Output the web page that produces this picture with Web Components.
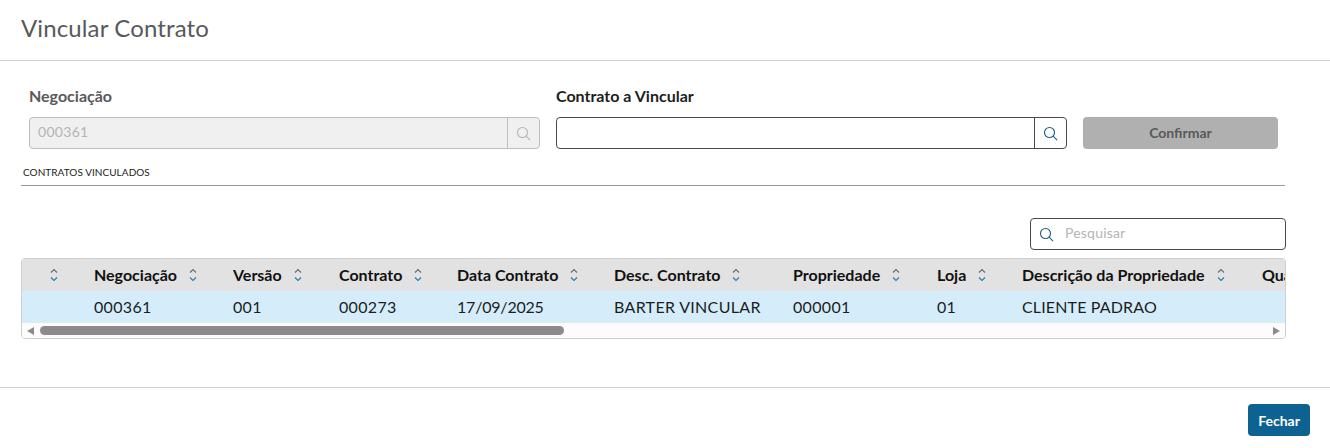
<!DOCTYPE html>
<html lang="pt-BR">
<head>
<meta charset="utf-8">
<title>Vincular Contrato</title>
<style>
  html, body { margin: 0; padding: 0; background: #fff; }
  body { width: 1330px; height: 448px; overflow: hidden; font-family: "Lato", "Open Sans", sans-serif; color: #1d1d20; }
</style>
</head>
<body>
<contract-dialog></contract-dialog>

<template id="search-svg">
  <svg width="15" height="15" viewBox="0 0 15 15" fill="none" stroke-width="1.1">
    <circle cx="6.5" cy="6.5" r="5" stroke="var(--ring, #444)"></circle>
    <path d="M10.2 10.2l3.6 3.6" stroke="var(--handle, #0c6c94)" stroke-linecap="round"></path>
  </svg>
</template>

<script>
const searchIcon = () => document.getElementById("search-svg").innerHTML;

class LookupField extends HTMLElement {
  connectedCallback() {
    const disabled = this.hasAttribute("disabled");
    this.attachShadow({ mode: "open" }).innerHTML = /* html */`
    <style>
      :host { display: block; width: 511px; }
      label { display: block; font-size: 16px; line-height: 20px; font-weight: 700; height: 31px; color: ${disabled ? "#58595b" : "#1d1d20"}; }
      .box {
        display: flex; height: 32px; box-sizing: border-box; border-radius: 4px;
        border: 1px solid ${disabled ? "#bdbdbd" : "#4a4a4a"};
        background: ${disabled ? "#f0f0f0" : "#fff"};
      }
      .value { flex: 1; padding-left: 8px; font-size: 14px; line-height: 28px; color: #b5b5b5; letter-spacing: .3px; }
      .btn {
        box-sizing: border-box; width: 32px; display: flex; align-items: center; justify-content: center;
        border-left: 1px solid ${disabled ? "#bdbdbd" : "#4a4a4a"};
        --ring: ${disabled ? "#b5b5b5" : "#1f5a7d"}; --handle: ${disabled ? "#b5b5b5" : "#0c6c94"};
      }
    </style>
    <label>${this.getAttribute("label")}</label>
    <div class="box">
      <div class="value">${this.getAttribute("value") || ""}</div>
      <div class="btn">${searchIcon()}</div>
    </div>`;
  }
}
customElements.define("lookup-field", LookupField);

class ActionButton extends HTMLElement {
  connectedCallback() {
    const primary = this.hasAttribute("primary");
    this.attachShadow({ mode: "open" }).innerHTML = /* html */`
    <style>
      :host {
        display: flex; align-items: center; justify-content: center; box-sizing: border-box;
        height: 32px; border-radius: 4px; font-size: 14px; font-weight: 700;
        padding-bottom: var(--btn-lift, 0);
        background: ${primary ? "#0c6291" : "#b0b0b0"};
        color: ${primary ? "#fff" : "#58595b"};
      }
    </style>
    <slot></slot>`;
  }
}
customElements.define("action-button", ActionButton);

class SearchBox extends HTMLElement {
  connectedCallback() {
    this.attachShadow({ mode: "open" }).innerHTML = /* html */`
    <style>
      :host {
        display: flex; align-items: center; box-sizing: border-box;
        width: 256px; height: 32px; border: 1px solid #4a4a4a; border-radius: 4px;
        padding-left: 8px; gap: 11px; --ring: #1f5a7d; --handle: #0c6c94;
      }
      span { font-size: 14px; line-height: 16px; color: #b5b5b5; letter-spacing: .2px; padding-bottom: 2px; }
      svg { display: block; }
    </style>
    ${searchIcon()}<span>${this.getAttribute("placeholder")}</span>`;
  }
}
customElements.define("search-box", SearchBox);

class SortHeader extends HTMLElement {
  connectedCallback() {
    this.attachShadow({ mode: "open" }).innerHTML = /* html */`
    <style>
      :host { display: flex; align-items: center; white-space: nowrap; font-size: 16px; font-weight: 700; color: #111; gap: 11px; }
      svg { display: block; flex: none; margin-top: 1px; }
    </style>
    <slot></slot>
    <svg width="10" height="16" viewBox="0 0 10 16" fill="none" stroke-width="1.1">
      <path d="M2 5.5L5 2.5 8 5.5" stroke="#5f6f7a"></path>
      <path d="M2 10.5L5 13.5 8 10.5" stroke="#1f7fb5"></path>
    </svg>`;
  }
}
customElements.define("sort-header", SortHeader);

class ContractTable extends HTMLElement {
  connectedCallback() {
    const cols = [
      ["", ""], ["Negociação", "000361"], ["Versão", "001"], ["Contrato", "000273"],
      ["Data Contrato", "17/09/2025"], ["Desc. Contrato", "BARTER VINCULAR"],
      ["Propriedade", "000001"], ["Loja", "01"],
      ["Descrição da Propriedade", "CLIENTE PADRAO"], ["Quant", ""],
    ];
    const head = cols.map(c => `<div class="cell"><sort-header>${c[0]}</sort-header></div>`).join("");
    const row = cols.map(c => `<div class="cell">${c[1]}</div>`).join("");
    this.attachShadow({ mode: "open" }).innerHTML = /* html */`
    <style>
      :host { display: block; box-sizing: border-box; width: 1265px; height: 81px; border: 1px solid #cfcfcf; border-radius: 4px; overflow: hidden; }
      .row { display: grid; grid-template-columns: 72px 139px 106px 118px 157px 179px 144px 85px 240px 100px; height: 32px; width: 1340px; align-items: center; box-sizing: border-box; padding-bottom: 2px; }
      .head { background: #e2e2e2; }
      .body { background: #d5edfb; font-size: 16px; color: #1d1d20; letter-spacing: .32px; }
      .body .cell:nth-child(5) { letter-spacing: -.2px; }
      .body .cell:nth-child(9) { letter-spacing: .15px; }
      .cell { overflow: hidden; white-space: nowrap; }
      .cell:first-child sort-header { padding-left: 27px; gap: 0; }
      .bar { display: flex; align-items: center; height: 15px; background: #fcfcfc; padding: 0 5px; gap: 6px; }
      .arrow { width: 0; height: 0; border-top: 4px solid transparent; border-bottom: 4px solid transparent; }
      .left { border-right: 7px solid #8b8b8b; }
      .right { border-left: 7px solid #8b8b8b; margin-left: auto; }
      .thumb { width: 524px; height: 9px; border-radius: 5px; background: #8b8b8b; }
    </style>
    <div class="row head">${head}</div>
    <div class="row body">${row}</div>
    <div class="bar"><i class="arrow left"></i><div class="thumb"></div><i class="arrow right"></i></div>`;
  }
}
customElements.define("contract-table", ContractTable);

class ContractDialog extends HTMLElement {
  connectedCallback() {
    this.attachShadow({ mode: "open" }).innerHTML = /* html */`
    <style>
      :host { display: block; width: 1330px; height: 448px; }
      header { height: 60px; border-bottom: 1px solid #cfcfcf; padding-left: 21px; font-size: 24px; line-height: 56px; color: #58595b; letter-spacing: .12px; }
      main { height: 327px; box-sizing: border-box; border-bottom: 1px solid #cfcfcf; padding: 25px 45px 0 21px; }
      .form { display: flex; align-items: flex-end; gap: 16px; padding-left: 8px; }
      .form action-button { width: 195px; margin-right: 7px; --btn-lift: 2px; }
      .section { font-size: 10px; line-height: 14px; margin-top: 16px; padding: 0 0 6px 2px; border-bottom: 1px solid #9a9a9a; width: 1262px; color: #1d1d20; letter-spacing: .05px; }
      .tools { display: flex; justify-content: flex-end; margin: 32px 0 8px; width: 1265px; }
      footer { display: flex; justify-content: flex-end; padding: 16px 20px 0 0; }
      footer action-button { width: 62px; }
    </style>
    <header>Vincular Contrato</header>
    <main>
      <div class="form">
        <lookup-field label="Negociação" value="000361" disabled></lookup-field>
        <lookup-field label="Contrato a Vincular"></lookup-field>
        <action-button>Confirmar</action-button>
      </div>
      <div class="section">CONTRATOS VINCULADOS</div>
      <div class="tools"><search-box placeholder="Pesquisar"></search-box></div>
      <contract-table></contract-table>
    </main>
    <footer><action-button primary>Fechar</action-button></footer>`;
  }
}
customElements.define("contract-dialog", ContractDialog);
</script>
</body>
</html>
